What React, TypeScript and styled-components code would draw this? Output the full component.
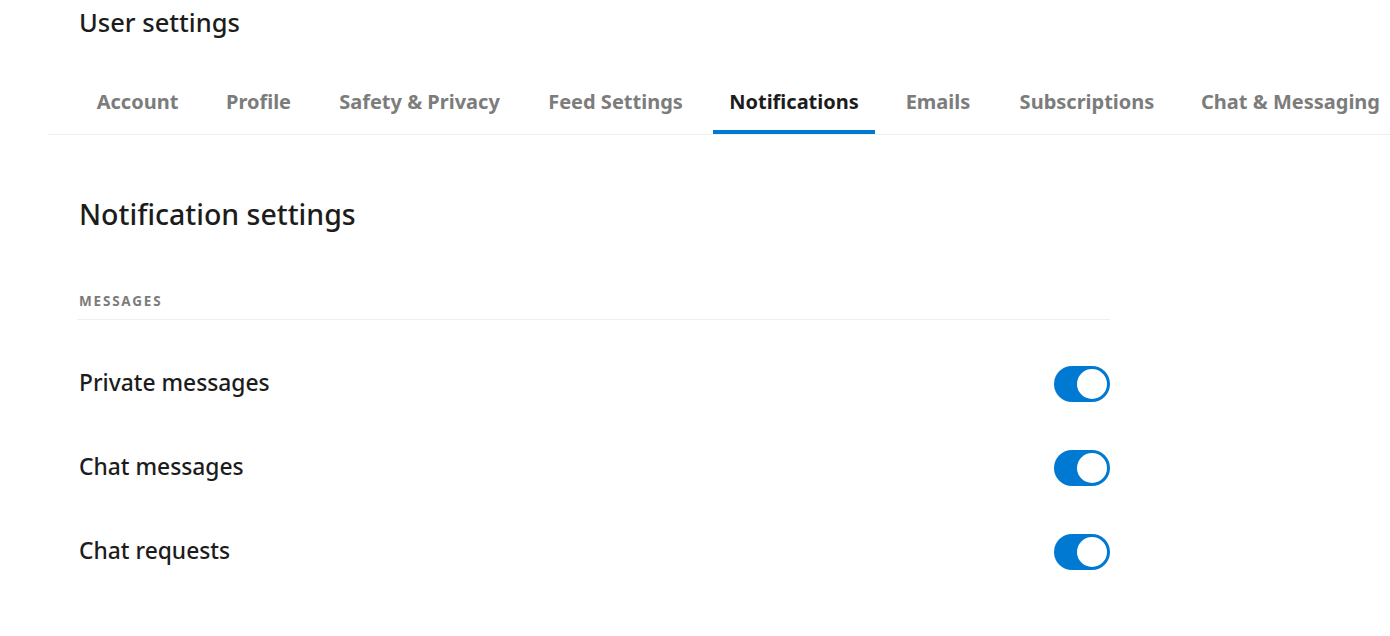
import React, { useState } from 'react';
import styled, { createGlobalStyle } from 'styled-components';

const GlobalStyle = createGlobalStyle`
    body {
        margin: 0;
        background: #ffffff;
        font-family: "Noto Sans", "Open Sans", Arial, sans-serif;
        color: #1c1c1c;
    }
`;

const Page = styled.div`
    width: 1390px;
    height: 636px;
    overflow: hidden;
    background: #ffffff;
`;

const Header = styled.header`
    margin-left: 48px;
    border-bottom: 1px solid #edeff1;
`;

const Title = styled.h1`
    margin: 0;
    padding: 6px 0 0 31px;
    height: 64px;
    font-size: 25.5px;
    line-height: 32px;
    font-weight: 500;
    color: #1c1c1c;
`;

const TabList = styled.nav`
    display: flex;
    gap: 12px;
    padding-left: 31px;
`;

const Tab = styled.a<{ $active?: boolean; $width: number }>`
    box-sizing: border-box;
    flex-shrink: 0;
    width: ${p => p.$width}px;
    height: 64px;
    display: flex;
    align-items: center;
    justify-content: center;
    padding-top: 2px;
    border-bottom: 4px solid ${p => (p.$active ? '#0079d3' : 'transparent')};
    font-size: 20px;
    font-weight: 700;
    white-space: nowrap;
    color: ${p => (p.$active ? '#1c1c1c' : '#7c7c7c')};
    cursor: pointer;
`;

const Content = styled.main`
    width: 1033px;
    margin-left: 77px;
    padding-top: 61px;
`;

const SectionTitle = styled.h2`
    margin: 0 0 0 2px;
    font-size: 28.5px;
    line-height: 36px;
    font-weight: 500;
    color: #1c1c1c;
`;

const GroupLabel = styled.h3`
    margin: 61px 0 0;
    padding: 0 0 10px 2px;
    border-bottom: 1px solid #edeff1;
    font-size: 13.5px;
    line-height: 16px;
    font-weight: 700;
    letter-spacing: 1.8px;
    color: #7c7c7c;
`;

const List = styled.div`
    padding-top: 22px;
`;

const Row = styled.div`
    display: flex;
    align-items: center;
    justify-content: space-between;
    height: 84px;
    padding-left: 2px;
`;

const Label = styled.span`
    padding-bottom: 3px;
    font-size: 22.8px;
    font-weight: 500;
    color: #1c1c1c;
`;

const Switch = styled.button<{ $on: boolean }>`
    position: relative;
    flex-shrink: 0;
    width: 56px;
    height: 36px;
    padding: 0;
    border: none;
    border-radius: 18px;
    background: ${p => (p.$on ? '#0079d3' : '#edeff1')};
    cursor: pointer;

    &::after {
        content: '';
        position: absolute;
        top: 3px;
        left: ${p => (p.$on ? '23px' : '3px')};
        width: 30px;
        height: 30px;
        border-radius: 50%;
        background: #ffffff;
        transition: left 0.15s;
    }
`;

const tabs = [
    { name: 'Account', width: 117 },
    { name: 'Profile', width: 101 },
    { name: 'Safety & Privacy', width: 197 },
    { name: 'Feed Settings', width: 171 },
    { name: 'Notifications', width: 162 },
    { name: 'Emails', width: 102 },
    { name: 'Subscriptions', width: 172 },
    { name: 'Chat & Messaging', width: 211 },
];

const App: React.FunctionComponent = () => {
    const [settings, setSettings] = useState<{ [key: string]: boolean }>({
        'Private messages': true,
        'Chat messages': true,
        'Chat requests': true,
    });

    const toggle = (key: string) => {
        setSettings({ ...settings, [key]: !settings[key] });
    };

    return (
        <Page>
            <GlobalStyle />
            <Header>
                <Title>User settings</Title>
                <TabList>
                    {tabs.map(tab => (
                        <Tab key={tab.name} $width={tab.width} $active={tab.name === 'Notifications'}>
                            {tab.name}
                        </Tab>
                    ))}
                </TabList>
            </Header>
            <Content>
                <SectionTitle>Notification settings</SectionTitle>
                <GroupLabel>MESSAGES</GroupLabel>
                <List>
                    {Object.keys(settings).map(key => (
                        <Row key={key}>
                            <Label>{key}</Label>
                            <Switch $on={settings[key]} onClick={() => toggle(key)} aria-label={key} />
                        </Row>
                    ))}
                </List>
            </Content>
        </Page>
    );
};

export default App;
